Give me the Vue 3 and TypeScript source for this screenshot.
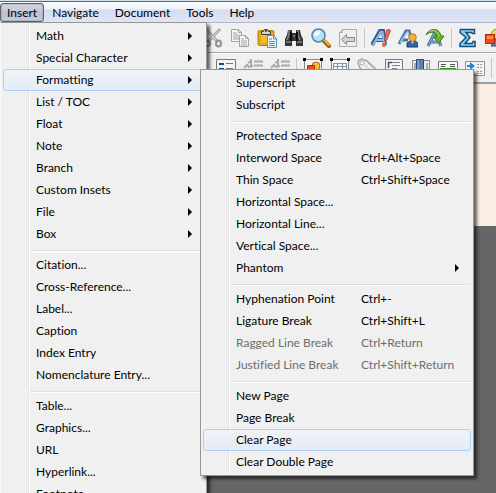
<script setup lang="ts">
interface MenuEntry {
  label: string
  shortcut?: string
  sub?: boolean
  active?: boolean
  disabled?: boolean
}

const bar: string[] = ['Insert', 'Navigate', 'Document', 'Tools', 'Help']

const insertMenu: MenuEntry[][] = [
  [
    { label: 'Math', sub: true },
    { label: 'Special Character', sub: true },
    { label: 'Formatting', sub: true, active: true },
    { label: 'List / TOC', sub: true },
    { label: 'Float', sub: true },
    { label: 'Note', sub: true },
    { label: 'Branch', sub: true },
    { label: 'Custom Insets', sub: true },
    { label: 'File', sub: true },
    { label: 'Box', sub: true },
  ],
  [
    { label: 'Citation...' },
    { label: 'Cross-Reference...' },
    { label: 'Label...' },
    { label: 'Caption' },
    { label: 'Index Entry' },
    { label: 'Nomenclature Entry...' },
  ],
  [
    { label: 'Table...' },
    { label: 'Graphics...' },
    { label: 'URL' },
    { label: 'Hyperlink...' },
    { label: 'Footnote' },
  ],
]

const formattingMenu: MenuEntry[][] = [
  [{ label: 'Superscript' }, { label: 'Subscript' }],
  [
    { label: 'Protected Space' },
    { label: 'Interword Space', shortcut: 'Ctrl+Alt+Space' },
    { label: 'Thin Space', shortcut: 'Ctrl+Shift+Space' },
    { label: 'Horizontal Space...' },
    { label: 'Horizontal Line...' },
    { label: 'Vertical Space...' },
    { label: 'Phantom', sub: true },
  ],
  [
    { label: 'Hyphenation Point', shortcut: 'Ctrl+-' },
    { label: 'Ligature Break', shortcut: 'Ctrl+Shift+L' },
    { label: 'Ragged Line Break', shortcut: 'Ctrl+Return', disabled: true },
    { label: 'Justified Line Break', shortcut: 'Ctrl+Shift+Return', disabled: true },
  ],
  [
    { label: 'New Page' },
    { label: 'Page Break' },
    { label: 'Clear Page', active: true },
    { label: 'Clear Double Page' },
  ],
]

const menus = [
  { name: 'Insert', cls: 'menu-insert', groups: insertMenu },
  { name: 'Formatting', cls: 'menu-formatting', groups: formattingMenu },
]
</script>

<template>
  <div class="window">
    <nav class="menubar" aria-label="Main menu">
      <button v-for="name in bar" :key="name" type="button" :class="{ open: name === 'Insert' }">{{ name }}</button>
    </nav>

    <div class="toolbar standard">
      <button type="button" aria-label="Cut">
        <svg viewBox="0 0 20 20" fill="none" stroke="#929292" stroke-width="2">
          <path d="M17 1 5 14M3 1l12 13" stroke="#a8a8a8" stroke-width="3" />
          <path d="M16 2 6 13M4 2l10 11" stroke="#dcdcdc" stroke-width="1" />
          <ellipse cx="4" cy="15.500" rx="3" ry="2.500" /><ellipse cx="15.500" cy="15.500" rx="2.500" ry="3" />
        </svg>
      </button>
      <button type="button" aria-label="Copy">
        <svg viewBox="0 0 20 20" fill="#f6f6f6" stroke="#a4a4a4">
          <path d="M1.500 1.500h7l3 3v9h-10zM8.500 1.500v3h3M3 5h4M3 7h6M3 9h6M3 11h6" />
          <path d="M9.500 7.500h6l3 3v8h-9zM15.500 7.500v3h3M11 11h3M11 13h6M11 15h6M11 17h6" />
        </svg>
      </button>
      <button type="button" aria-label="Paste">
        <svg viewBox="0 0 20 20">
          <rect x="1" y="2.500" width="16" height="15" rx="1.500" fill="#e7a71b" stroke="#b97a09" />
          <path d="M4 5h10v10H4z" fill="#f3bb32" />
          <path d="M4.500 6.500v-3h2l1-2h3l1 2h2v3z" fill="#d4d4d4" stroke="#414141" /><circle cx="9" cy="3" r="1" fill="#333" />
          <path d="M10.500 7.500h6l3 3v9h-9z" fill="#edf6fb" stroke="#5f8eb2" />
          <path d="M16.500 8v3h3M12 11h3M12 13.500h6M12 15.500h6M12 17.500h6" fill="none" stroke="#4a91bd" />
        </svg>
      </button>
      <button type="button" aria-label="Find">
        <svg viewBox="0 0 20 20">
          <path d="M4 2h4v3h4V2h4l1 5 2 4v7h-7v-5H8v5H1v-7l2-4z" fill="#343434" />
          <path d="M5 2v5l-2 5M14 2v5l2 5M2 14h5M13 14h5M9 8h2" stroke="#858585" stroke-width="1.500" fill="none" />
          <path d="M7 4v9M13 4v9" stroke="#0b0b0b" stroke-width="2" />
        </svg>
      </button>
      <button type="button" aria-label="Zoom">
        <svg viewBox="0 0 20 20">
          <path d="m13 13 5 5" stroke="#9d5b06" stroke-width="4" stroke-linecap="round" />
          <path d="m13 12 5 5" stroke="#f3ae25" stroke-width="2" stroke-linecap="round" />
          <circle cx="7.500" cy="7.500" r="6.500" fill="#b4e3f8" stroke="#5c7fa8" stroke-width="1.500" />
          <path d="M3 8a4.500 4.500 0 0 1 6-5c1 3-2 5.500-6 5" fill="#effaff" />
        </svg>
      </button>
      <button type="button" aria-label="Navigate back">
        <svg viewBox="0 0 20 20" fill="#efefef" stroke="#ababab">
          <path d="M4.500 1.500h14v17h-17v-14zM4.500 1.500v3h-3" />
          <path d="m3.500 11.500 5-5v3h8v4h-8v3z" fill="#d3d3d3" stroke="#888" />
        </svg>
      </button>
      <i class="divider" />
      <button type="button" aria-label="Emphasis">
        <svg viewBox="0 0 20 20" fill="none">
          <path d="M1 17 9 3h3l2 14M5 12h8" stroke="#315d94" stroke-width="4" />
          <path d="M2 17 9.500 4h2l2 13M5 12h8" stroke="#8db9e6" stroke-width="2" />
          <path d="m15.500 2 3-.5 1 1-4 10-2 .5z" fill="#e87357" stroke="#b9483a" /><circle cx="13" cy="17" r="2" fill="#dc634f" />
        </svg>
      </button>
      <button type="button" aria-label="Noun style">
        <svg viewBox="0 0 20 20" fill="none">
          <path d="M1 16 8 3h3l2 8M4 12h6" stroke="#4773a7" stroke-width="3" />
          <path d="M2 15 9 4h1l2 7" stroke="#9bc5eb" stroke-width="1.500" />
          <path d="M9 19v-4l3-2h5l3 2v4z" fill="#3566aa" stroke="#19437b" /><path d="m13 13 1.500 3 1.500-3" fill="#e8eff8" />
          <circle cx="14.500" cy="9.500" r="3.800" fill="#f4ae47" stroke="#b87721" />
        </svg>
      </button>
      <button type="button" aria-label="Apply last style">
        <svg viewBox="0 0 20 20" fill="none">
          <path d="m3 18 6-12h2l5 12M6 14h8" stroke="#466f9f" stroke-width="3" />
          <path d="m3 18 6-12h2l5 12M6 14h8" stroke="#94bce0" />
          <path d="M1 7C3 1 14-2 16 8h3l-5 7-6-6h4C11 3 5 3 1 7z" fill="#67b52e" stroke="#397e1a" />
          <path d="M4 4c4-3 9-2 10 5" stroke="#a7da66" />
        </svg>
      </button>
      <i class="divider" />
      <button type="button" aria-label="Insert math">
        <svg viewBox="0 0 20 20"><path d="M2.500 1.500h14v4h-2l-1-1H8l4 5-5 6h7l1-2h2v5h-15v-3l6-6-6-5z" fill="#8ccdf2" stroke="#164f7e" stroke-width="1.500" /></svg>
      </button>
      <button type="button" aria-label="Insert graphics">
        <svg viewBox="0 0 20 20">
          <circle cx="12" cy="7" r="6" fill="#f8ce4b" stroke="#b58b28" /><path d="m12 9 6 9H6z" fill="#568cbd" stroke="#244e7a" />
          <rect x=".5" y="6.500" width="9" height="9" fill="#ed4a14" stroke="#b42d05" /><path d="M2 8h6v3H2z" fill="#ff8852" />
        </svg>
      </button>
    </div>

    <div class="toolbar extra">
      <button type="button" aria-label="Itemized list">
        <svg viewBox="0 0 20 20"><path d="M.5 1.500h19v17H.5z" fill="#f4f4f4" stroke="#777" /><path d="M3 5h5v2H3zM3 10h5v2H3z" fill="#174a79" /><path d="M10 5.500h7M10 10.500h7" stroke="#777" /></svg>
      </button>
      <button v-for="side in ['Increase', 'Decrease']" :key="side" type="button" :aria-label="side + ' depth'">
        <svg viewBox="0 0 20 20" fill="none" stroke="#aaa"><path d="M11 3.500h9M11 7.500h9" stroke-width="2" /><path d="M8 1v8M5 5l3-2M1 10l3-3 2 2 4-1M0 12h19" stroke-width="2" /></svg>
      </button>
      <i class="divider" />
      <button type="button" aria-label="Figure float">
        <svg viewBox="0 0 20 20"><path d="M1.500 1.500h17v17h-17z" fill="#f7f7f7" stroke="#222" stroke-dasharray="1 1" /><path d="M0 0h3v3H0zM17 0h3v3h-3z" /><circle cx="13" cy="8" r="4" fill="#f2bd3c" stroke="#9e7119" /><path d="M4.500 7.500h7v7h-7z" fill="#ef4b18" stroke="#b12b08" /></svg>
      </button>
      <button type="button" aria-label="Table float">
        <svg viewBox="0 0 20 20"><path d="M1.500 1.500h17v17h-17z" fill="#f7f7f7" stroke="#222" stroke-dasharray="1 1" /><path d="M0 0h3v3H0zM17 0h3v3h-3z" /><path d="M3.500 5.500h13v11h-13zM3 8.500h13M3 11.500h13M7.500 5v11M12.500 5v11" fill="none" stroke="#8592aa" /></svg>
      </button>
      <button type="button" aria-label="Insert label">
        <svg viewBox="0 0 20 20"><path d="M1 5q0-3 4-4l5 2 9 8-7 8-9-9z" fill="#ededed" stroke="#a7a7a7" stroke-width="1.500" /><circle cx="5" cy="5" r="2" fill="#fff" stroke="#aaa" /><path d="m8 7 5 5m-2-7 5 5" stroke="#bbb" /></svg>
      </button>
      <button type="button" aria-label="Cross-reference">
        <svg viewBox="0 0 20 20"><path d="M1.500 1.500h17v17h-17z" fill="#f5f5f5" stroke="#777" /><path d="M8 4.500h8M8 7.500h8M8 10.500h5" stroke="#828282" /><path d="M4.500 10V4.500H8" fill="none" stroke="#28578a" stroke-width="1.500" /></svg>
      </button>
      <button type="button" aria-label="Index entry">
        <svg viewBox="0 0 20 20"><path d="M1.500 2.500h17v16h-17z" fill="#eee" stroke="#888" /><path d="M4 5v10M16 5v10" stroke="#aaa" stroke-width="2" /><path d="M5.500 1.500h7v17h-7z" fill="#5f80b3" stroke="#294877" /><path d="M7 2v15" stroke="#9bb5d8" /></svg>
      </button>
      <button type="button" aria-label="Footnote">
        <svg viewBox="0 0 20 20"><path d="M.5 3.500h19v15H.5z" fill="#fafafa" stroke="#777" /><path d="M3 6.500h5M12 6.500h5M3 8.500h4M12 8.500h5" stroke="#555" /><path d="M2 11h16" stroke="#26a112" stroke-width="2" /></svg>
      </button>
      <button type="button" aria-label="Margin note">
        <svg viewBox="0 0 20 20"><path d="M.5 3.500h19v14H.5z" fill="#f3f3f3" stroke="#929292" /><path d="M12 6.500h5M12 9.500h5M12 13.500h5M12 15.500h5" stroke="#999" stroke-dasharray="2 1" /><path d="M2 7h3V4l5 4-5 4V9H2z" fill="#2383d3" /></svg>
      </button>
      <i class="divider" />
    </div>

    <main class="document">
      <div class="paper" />
    </main>

    <div v-for="menu in menus" :key="menu.name" class="menu" :class="menu.cls" role="menu" :aria-label="menu.name">
      <div v-for="(group, g) in menu.groups" :key="g" class="group" role="group">
        <button
          v-for="item in group"
          :key="item.label"
          type="button"
          role="menuitem"
          class="item"
          :class="{ active: item.active }"
          :disabled="item.disabled"
        >
          <span class="label">{{ item.label }}</span>
          <span v-if="item.shortcut" class="shortcut">{{ item.shortcut }}</span>
          <svg v-if="item.sub" class="arrow" viewBox="0 0 4 8"><path d="M0 0l4 4-4 4z" /></svg>
        </button>
      </div>
    </div>
  </div>
</template>

<style>
body {
  margin: 0;
}
</style>

<style scoped>
.window {
  position: relative;
  display: flex;
  flex-direction: column;
  height: 100vh;
  overflow: hidden;
  background: #f0f0f0;
  color: #000;
  font: 12px/20px Lato, 'Noto Sans', sans-serif;
  font-variant-ligatures: none;
}
button {
  box-sizing: border-box;
  margin: 0;
  padding: 0;
  border: 0;
  background: none;
  color: inherit;
  font: inherit;
  font-variant-ligatures: none;
}
.menubar {
  display: flex;
  flex: none;
  box-sizing: border-box;
  height: 23px;
  padding-top: 3px;
  border-bottom: 1px solid #b3b8c8;
  background: linear-gradient(#cfe2ee 1px, #4e6a78 1px 2px, #fff 2px, #eef1f9 9px, #d5dcee 10px, #dfe5f5);
}
.menubar button {
  height: 19px;
  padding: 0 8px;
  line-height: 18px;
}
.menubar .open {
  padding: 0 6px;
  border: 1px solid #5c606b;
  border-radius: 3px;
  background: linear-gradient(#d5d8e2, #c4c8d5 45%, #b9bfcf 50%, #c8cee0);
  box-shadow: inset 0 0 2px #7b8090;
  line-height: 16px;
}
.toolbar {
  display: flex;
  flex: none;
  align-items: center;
  box-sizing: border-box;
  height: 30px;
  border-bottom: 1px solid #a6a6a6;
  background: #f0f0f0;
}
.standard {
  padding-left: 199px;
}
.extra {
  height: 31px;
  padding-left: 212px;
  border-top: 1px solid #fff;
  border-bottom: 2px solid #9a9da3;
}
.toolbar button {
  display: flex;
  flex: none;
  justify-content: center;
  width: 27px;
}
.toolbar svg {
  flex: none;
  width: 20px;
  height: 20px;
}
.divider {
  flex: none;
  width: 1px;
  height: 20px;
  margin: 0 2px 0 3px;
  background: #c6c6c6;
}
.document {
  flex: 1;
  background: #666;
}
.paper {
  height: 142px;
  background: #faeee3;
}
.menu {
  position: absolute;
  box-sizing: border-box;
  padding: 2px;
  border: 1px solid #979797;
  background: linear-gradient(90deg, transparent 25px, #e2e3e3 25px 26px, #fff 26px 27px, transparent 27px) padding-box #f0f0f0;
  box-shadow: 3px 3px 3px rgba(0, 0, 0, 0.6);
}
.menu {
  background-position: 2px 0;
}
.menu-insert {
  top: 22px;
  left: 0;
  width: 207px;
  border-left-color: #fafafa;
}
.menu-formatting {
  top: 69px;
  left: 200px;
  width: 274px;
}
.group + .group::before {
  content: '';
  display: block;
  height: 2px;
  margin: 5px 0 2px 27px;
  box-sizing: border-box;
  border-top: 1px solid #e0e0e0;
  border-bottom: 1px solid #fff;
}
.item {
  display: flex;
  align-items: center;
  width: 100%;
  height: 22px;
  padding: 0 11px 0 32px;
  border: 1px solid transparent;
  border-radius: 3px;
  text-align: left;
}
.item.active {
  border-color: #aecff7;
  background: linear-gradient(rgba(240, 245, 252, 0.6), rgba(220, 232, 250, 0.6));
}
.item:disabled {
  color: #6d6d6d;
}
.label {
  flex: 0 0 125px;
  white-space: nowrap;
}
.shortcut {
  white-space: nowrap;
}
.arrow {
  width: 4px;
  height: 8px;
  margin-left: auto;
}
</style>
